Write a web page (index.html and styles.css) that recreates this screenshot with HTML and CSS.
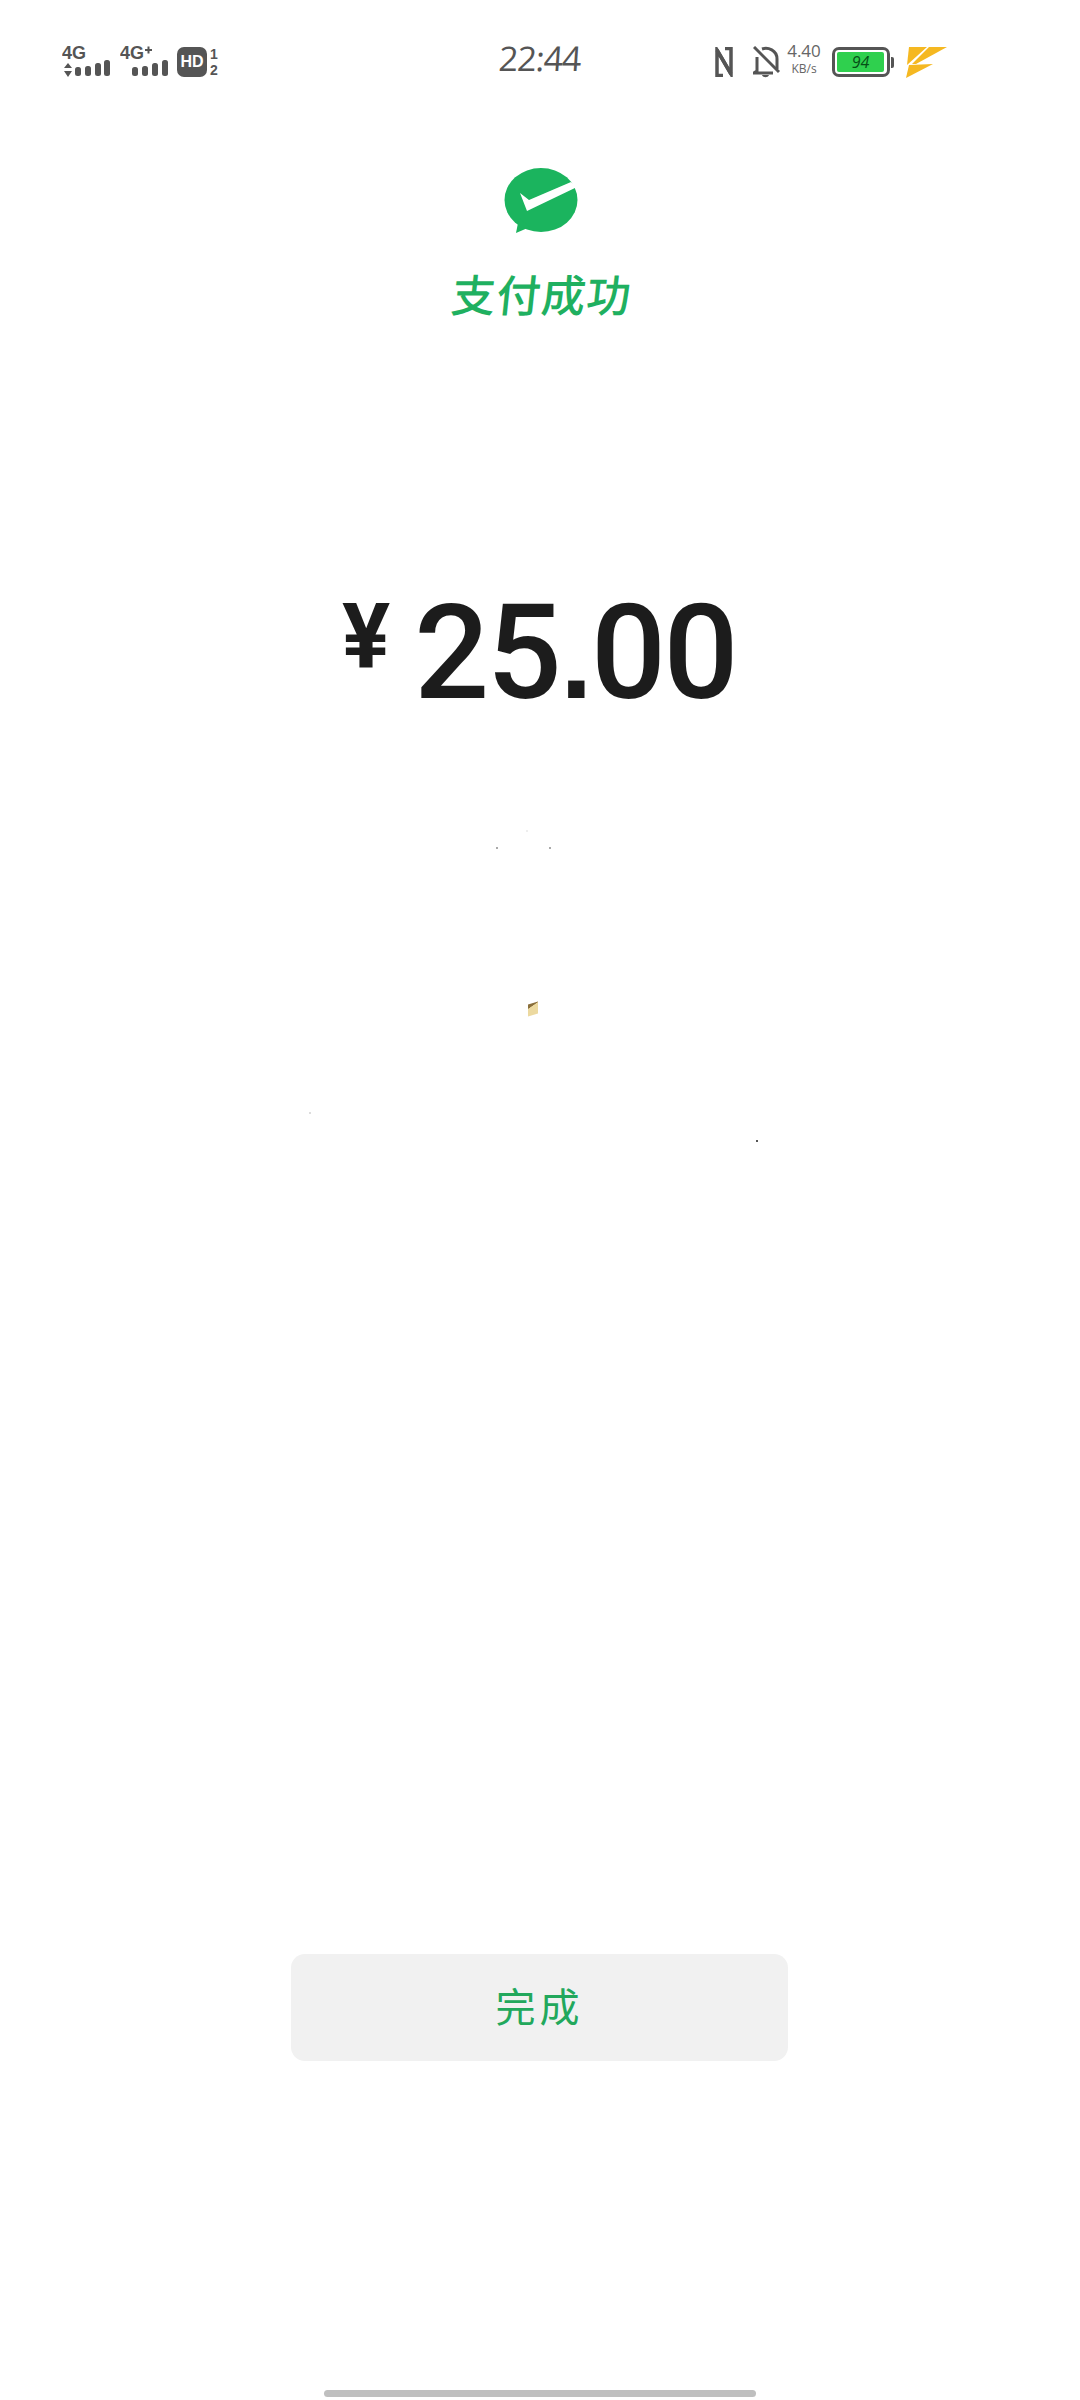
FILE: index.html
```html
<!DOCTYPE html>
<html lang="zh">
	<head>
		<meta charset="utf-8">
		<title>支付成功</title>
		<link rel="stylesheet" href="styles.css">
	</head>
	<body>
	<div class="page">
		<div class="statusBar">
			<div class="statusLeft">
				<svg class="sim" width="50" height="36" viewBox="0 -4 50 36">
					<text class="netText" x="0" y="13">4G</text>
					<path class="ink" d="M6 17l4 5H2zM6 31l4-6H2z"/>
					<rect class="ink" x="13" y="21" width="6" height="9" rx="2.500"/>
					<rect class="ink" x="23" y="20" width="6" height="10" rx="2.500"/>
					<rect class="ink" x="33" y="17" width="6" height="13" rx="2.500"/>
					<rect class="ink" x="42" y="14" width="6" height="16" rx="2.500"/>
				</svg>
				<svg class="sim sim2" width="50" height="36" viewBox="0 -4 50 36">
					<text class="netText" x="0" y="13">4G</text>
					<path class="ink" d="M25 3h7v2h-7zM27.500 .5h2v7h-2z"/>
					<rect class="ink" x="12" y="21" width="6" height="9" rx="2.500"/>
					<rect class="ink" x="22" y="20" width="6" height="10" rx="2.500"/>
					<rect class="ink" x="32" y="17" width="6" height="13" rx="2.500"/>
					<rect class="ink" x="42" y="14" width="6" height="16" rx="2.500"/>
				</svg>
				<div class="hdBox">HD</div>
				<div class="hdNums"><span>1</span><span>2</span></div>
			</div>
			<div class="clock">22:44</div>
			<div class="statusRight">
				<svg width="18" height="30" viewBox="0 0 18 30">
					<path class="line nfcLine" d="M8 28.500H2V3l14 24"/>
					<path class="line nfcLine" d="M10 1.500h6V27L2 3"/>
				</svg>
				<svg class="bell" width="27" height="32" viewBox="0 0 27 32">
					<path class="line" d="M9 3c6-2 15 1 15 10v10"/>
					<path class="line" d="M4 11v14l-3 2h19"/>
					<path class="line" d="M1 1l25 25"/>
					<path class="ink" d="M9 29h7c-1 3-6 3-7 0z"/>
				</svg>
				<div class="speed"><span>4.40</span><small>KB/s</small></div>
				<div class="battery">
					<div class="batteryBody"><div class="batteryFill">94</div></div>
					<div class="batteryNub"></div>
				</div>
				<svg class="bolt" width="43" height="32" viewBox="0 0 43 32">
					<path class="boltFill" d="M5 1h18L3 19z"/>
					<path class="boltFill" d="M25 1h18L12 18H8z"/>
					<path class="boltFill" d="M5 19l24-1-27 14z"/>
				</svg>
			</div>
		</div>

		<svg class="logo" width="74" height="67" viewBox="0 0 74 67">
			<ellipse class="logoFill" cx="37" cy="32" rx="36.500" ry="32"/>
			<path class="logoFill" d="M15 50l-3 15 14-6z"/>
			<path class="logoCheck" d="M16 25l9 7 42-18 6 5-50 24z"/>
		</svg>
		<div class="title">支付成功</div>

		<div class="amount">
			<span class="yen">¥</span>
			<span class="sum">25<span class="dot">.</span>00</span>
		</div>

		<button class="doneBtn">完成</button>
		<div class="homeBar"></div>

		<!-- specks left on the screenshot -->
		<i class="speck s1"></i>
		<i class="speck s2"></i>
		<i class="speck s3"></i>
		<i class="speck s4"></i>
		<i class="speck s5"></i>
		<i class="chip"></i>
	</div>
	</body>
</html>
```

FILE: styles.css
```css
html, body{margin:0; padding:0; background:#fff;}
body{font-family:"Noto Sans CJK SC", "Noto Sans", sans-serif;}
svg{display:block; flex:none;}

.page{position:relative; width:1080px; height:2400px; overflow:hidden; display:flex; flex-direction:column; align-items:center;}
.page>*{flex:none;}

.statusBar{width:100%; height:120px; box-sizing:border-box; padding:4px 133px 0 62px; display:flex; align-items:center;}
.statusLeft{width:438px; display:flex; align-items:center;}
.statusRight{margin-left:136px; display:flex; align-items:center;}

.ink{fill:#555;}
.line{fill:none; stroke:#555; stroke-width:3;}
.nfcLine{stroke-width:3.500;}
.netText{font-family:"Liberation Sans", sans-serif; font-weight:700; font-size:18px; fill:#555;}
.sim{margin-bottom:4px;}
.sim2{margin-left:8px;}
.hdBox{width:30px; height:30px; margin-left:7px; border-radius:7px; background:#555; color:#fff; font:700 16px/30px "Liberation Sans", sans-serif; text-align:center;}
.hdNums{margin-left:3px; height:30px; display:flex; flex-direction:column; justify-content:space-between; color:#555; font:700 14px/14px "Liberation Sans", sans-serif;}

.clock{width:80px; margin-top:-8px; text-align:center; color:#555; font:400 34px/40px "Open Sans", sans-serif; letter-spacing:-1px; transform:skewX(-4deg);}

.bell{margin-left:20px;}
.speed{width:38px; margin:-6px 0 0 5px; display:flex; flex-direction:column; align-items:center; color:#666; font:400 17px/19px "Open Sans", sans-serif;}
.speed small{font-size:12px; line-height:17px;}

.battery{margin-left:9px; display:flex; align-items:center;}
.batteryBody{width:58px; height:30px; box-sizing:border-box; border:3px solid #555; border-radius:7px; padding:2px;}
.batteryFill{height:100%; margin-right:1px; background:#2fd04e; border-radius:2px; color:#064f17; font:italic 400 16px/20px "Open Sans", sans-serif; text-align:center;}
.batteryNub{width:3px; height:11px; background:#555; border-radius:0 2px 2px 0; margin-left:1px;}

.bolt{margin-left:10px;}
.boltFill{fill:#f5b821;}

.logo{margin:48px 0 0 2px;}
.logoFill{fill:#1bb45e;}
.logoCheck{fill:#fff;}

.title{margin:30px 0 0 3px; color:#1fb060; font-size:44px; line-height:56px; font-weight:500; letter-spacing:1px; transform:skewX(-6deg);}

.amount{margin:265px 0 0 -3px; width:393px; display:flex; align-items:flex-start;}
.yen{width:50px; margin-top:7px; font:700 90px/90px Roboto, sans-serif; color:#1c1c1c;}
.sum{margin-left:24px; font:500 132px/134px Roboto, sans-serif; color:#1c1c1c; letter-spacing:-2.500px;}
.dot{margin:0 1px; font-family:"Liberation Sans", sans-serif; font-size:116px; font-weight:700; line-height:0;}

.doneBtn{display:block; margin:1234px 0 0 -1px; width:497px; height:107px; padding:0 0 6px; border:0; border-radius:14px; background:#f1f1f1; color:#22a85c; font-family:inherit; font-size:40px; letter-spacing:4px;}

.homeBar{margin-top:329px; width:432px; height:7px; border-radius:4px; background:#bfbfbf;}

.speck{position:absolute; width:2px; height:2px; background:#aaa;}
.s1{left:496px; top:847px;}
.s2{left:549px; top:847px;}
.s3{left:309px; top:1112px; background:#ddd;}
.s4{left:756px; top:1140px; background:#555;}
.s5{left:526px; top:830px; background:#eee;}
.chip{position:absolute; left:528px; top:1003px; width:10px; height:12px; background:linear-gradient(160deg, #8a6f3c 0 25%, #ecd9a0 30%); transform:skewY(-18deg);}
```
